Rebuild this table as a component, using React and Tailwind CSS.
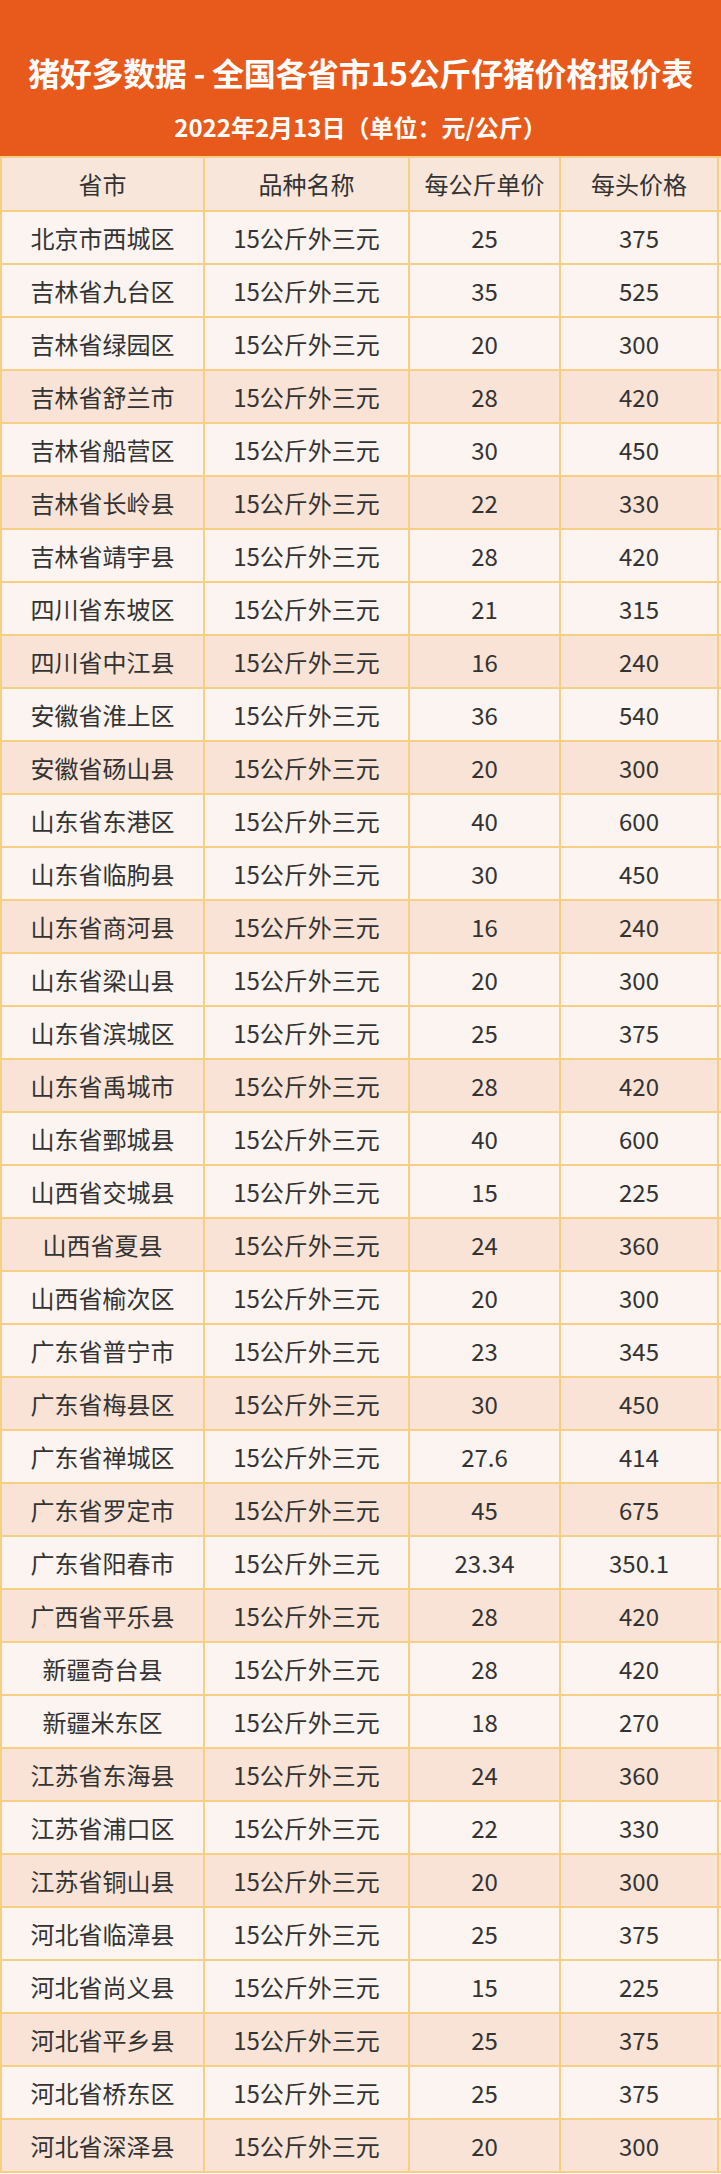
import React from 'react'

const rows = [
  ['北京市西城区', '25', '375', false],
  ['吉林省九台区', '35', '525', false],
  ['吉林省绿园区', '20', '300', false],
  ['吉林省舒兰市', '28', '420', true],
  ['吉林省船营区', '30', '450', false],
  ['吉林省长岭县', '22', '330', true],
  ['吉林省靖宇县', '28', '420', false],
  ['四川省东坡区', '21', '315', false],
  ['四川省中江县', '16', '240', true],
  ['安徽省淮上区', '36', '540', false],
  ['安徽省砀山县', '20', '300', true],
  ['山东省东港区', '40', '600', false],
  ['山东省临朐县', '30', '450', false],
  ['山东省商河县', '16', '240', true],
  ['山东省梁山县', '20', '300', false],
  ['山东省滨城区', '25', '375', false],
  ['山东省禹城市', '28', '420', true],
  ['山东省鄄城县', '40', '600', false],
  ['山西省交城县', '15', '225', false],
  ['山西省夏县', '24', '360', true],
  ['山西省榆次区', '20', '300', false],
  ['广东省普宁市', '23', '345', false],
  ['广东省梅县区', '30', '450', true],
  ['广东省禅城区', '27.6', '414', false],
  ['广东省罗定市', '45', '675', true],
  ['广东省阳春市', '23.34', '350.1', false],
  ['广西省平乐县', '28', '420', true],
  ['新疆奇台县', '28', '420', false],
  ['新疆米东区', '18', '270', false],
  ['江苏省东海县', '24', '360', true],
  ['江苏省浦口区', '22', '330', false],
  ['江苏省铜山县', '20', '300', true],
  ['河北省临漳县', '25', '375', false],
  ['河北省尚义县', '15', '225', false],
  ['河北省平乡县', '25', '375', true],
  ['河北省桥东区', '25', '375', false],
  ['河北省深泽县', '20', '300', true],
]

const cell = 'flex items-center justify-center border-r-2 border-[#f6cf82]'

export default function App() {
  return (
    <div className="w-[721px] bg-white font-['Noto_Sans_CJK_SC','Noto_Sans',sans-serif]">
      {/* title band */}
      <div className="h-[156px] bg-[#e85a1b] flex flex-col items-center pt-[52px] text-white font-bold">
        <div className="text-[32px] leading-[40px] tracking-[-0.3px]">猪好多数据 - 全国各省市15公斤仔猪价格报价表</div>
        <div className="mt-[20px] text-[24px] leading-[30px]">2022年2月13日（单位：元/公斤）</div>
      </div>

      <div className="border-l-2 border-[#f6cf82] text-[24px] text-[#333333]">
        <div className="grid grid-cols-[203px_205px_151px_158px] h-[56px] border-y-2 border-[#f6cf82] bg-[#f9e6da]">
          <div className={cell}>省市</div>
          <div className={cell}>品种名称</div>
          <div className={cell}>每公斤单价</div>
          <div className={cell}>每头价格</div>
        </div>
        {rows.map(([place, unit, head, pink], i) => (
          <div
            key={i}
            className={`grid grid-cols-[203px_205px_151px_158px] h-[53px] border-b-2 border-[#f6cf82] ${pink ? 'bg-[#f8e3d6]' : 'bg-[#fbf4f0]'}`}
          >
            <div className={cell}>{place}</div>
            <div className={cell}>15公斤外三元</div>
            <div className={cell}>{unit}</div>
            <div className={cell}>{head}</div>
          </div>
        ))}
      </div>
    </div>
  )
}
